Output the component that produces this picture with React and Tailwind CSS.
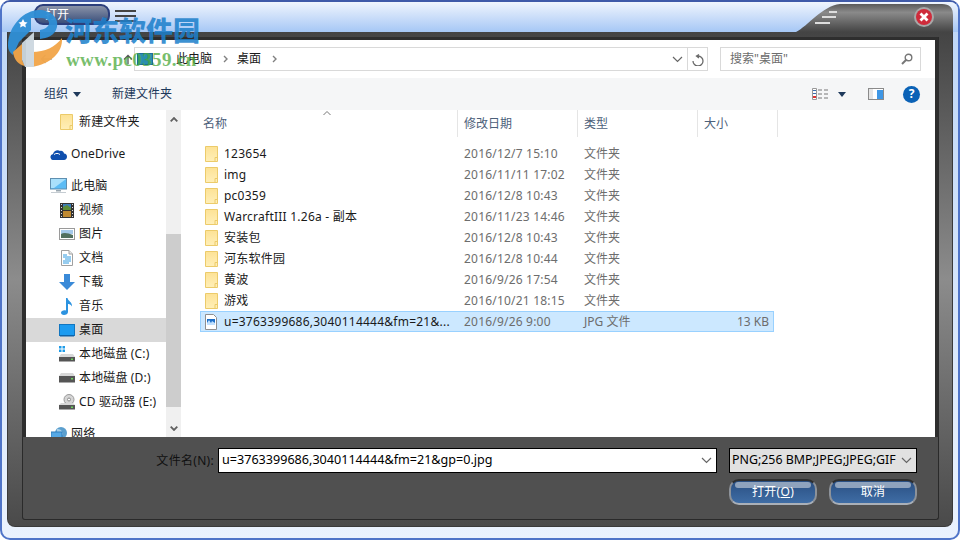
import React from 'react';

const files = [
  { name: '123654', date: '2016/12/7 15:10', type: '文件夹' },
  { name: 'img', date: '2016/11/11 17:02', type: '文件夹' },
  { name: 'pc0359', date: '2016/12/8 10:43', type: '文件夹' },
  { name: 'WarcraftIII 1.26a - 副本', date: '2016/11/23 14:46', type: '文件夹' },
  { name: '安装包', date: '2016/12/8 10:43', type: '文件夹' },
  { name: '河东软件园', date: '2016/12/8 10:44', type: '文件夹' },
  { name: '黄波', date: '2016/9/26 17:54', type: '文件夹' },
  { name: '游戏', date: '2016/10/21 18:15', type: '文件夹' },
];

const FolderIcon = () => (
  <svg width="13" height="16" viewBox="0 0 13 16" className="shrink-0">
    <defs>
      <linearGradient id="fold" x1="0" y1="0" x2="0" y2="1">
        <stop offset="0" stopColor="#fde295" />
        <stop offset="1" stopColor="#ffefb8" />
      </linearGradient>
    </defs>
    <path d="M.5.5h12v15H.5z" fill="url(#fold)" stroke="#eccb6a" />
    <path d="M10 15.500v-4h2.500" fill="none" stroke="#eccb6a" />
  </svg>
);

const Chevron = ({ className }) => (
  <svg width="11" height="7" viewBox="0 0 11 7" className={className}>
    <path d="M1 1l4.500 4.500L10 1" fill="none" stroke="currentColor" strokeWidth="1.200" />
  </svg>
);

const ScrollArrow = ({ className }) => (
  <svg width="8" height="5" viewBox="0 0 8 5" className={className}>
    <path d="M.7.7L4 4 7.300.7" fill="none" stroke="#606060" strokeWidth="1.800" />
  </svg>
);

const Caret = () => (
  <svg width="8" height="5" viewBox="0 0 8 5"><path d="M0 0h8L4 5z" fill="#1e395b" /></svg>
);

const Crumb = () => (
  <svg width="5" height="8" viewBox="0 0 5 8"><path d="M1 1l3 3-3 3" fill="none" stroke="#808080" strokeWidth="1.400" /></svg>
);

const icons = {
  folder: <FolderIcon />,
  cloud: (
    <svg width="17" height="11" viewBox="0 0 17 11">
      <path d="M4 11a3 3 0 0 1-1-6c.6-3 4.600-5 7-3 2-.6 3.600.6 4 2.500 2 0 3 1.500 3 3.200 0 1.800-1.200 3.300-3 3.300z" fill="#0f4fae" />
      <path d="M4 5.500c2-1.500 4-1.500 6 0" fill="none" stroke="#fff" />
    </svg>
  ),
  pc: (
    <svg width="17" height="16" viewBox="0 0 17 16">
      <rect x=".5" y=".5" width="16" height="10.500" fill="#5cbcf5" stroke="#5f8fb0" />
      <path d="M1 1h15L4 10H1z" fill="#a9e0fb" />
      <path d="M6 12h5v1.500H6z" fill="#9aa7b0" />
      <path d="M1 14h15v1H1z" fill="#c5ccd2" />
    </svg>
  ),
  video: (
    <svg width="14" height="15" viewBox="0 0 14 15">
      <rect width="14" height="15" fill="#333" />
      <path d="M3 1h8v6H3z" fill="#3f7fb8" />
      <path d="M3 8h8v6H3z" fill="#c08a32" />
      <path d="M3 4l4-2 4 3v2H3z" fill="#5e8e3a" />
      <path d="M1 1h1v1H1zM1 4h1v1H1zM1 7h1v1H1zM1 10h1v1H1zM1 13h1v1H1zM12 1h1v1h-1zM12 4h1v1h-1zM12 7h1v1h-1zM12 10h1v1h-1zM12 13h1v1h-1z" fill="#ddd" />
    </svg>
  ),
  image: (
    <svg width="16" height="12" viewBox="0 0 16 12">
      <rect x=".5" y=".5" width="15" height="11" fill="#fff" stroke="#9a9a9a" />
      <path d="M2 2h12v4H2z" fill="#a5c9ea" />
      <path d="M2 6c3-2 7-1 12 1v3H2z" fill="#52705f" />
    </svg>
  ),
  doc: (
    <svg width="12" height="16" viewBox="0 0 12 16">
      <path d="M.5.500h7.500l3.500 3.500v11.500H.5z" fill="#fff" stroke="#a0a0a0" />
      <path d="M8 .500v3.500h3.500" fill="#e8e8e8" stroke="#a0a0a0" />
      <path d="M2 5h4M2 7h8M4 9h6M2 11h8M2 13h6" stroke="#2f9ae0" />
    </svg>
  ),
  download: (
    <svg width="16" height="16" viewBox="0 0 16 16">
      <path d="M5 0h6v8h5l-8 8-8-8h5z" fill="#3a8ad8" />
    </svg>
  ),
  music: (
    <svg width="12" height="17" viewBox="0 0 12 17">
      <path d="M5 0h1.500c.3 3 5 4 4.500 8.500C10 6.500 8 6 7 6v8c0 2-2 3-4 3s-3-1-3-2.200C0 13 2.500 11.800 5 12.500z" fill="#2c93e0" />
    </svg>
  ),
  desktop: (
    <svg width="16" height="13" viewBox="0 0 16 13">
      <rect x=".5" y=".5" width="15" height="11" fill="#1c9bf0" stroke="#1276c0" />
      <path d="M1 11h14v1.500H1z" fill="#0e63a8" />
    </svg>
  ),
  winDrive: (
    <svg width="16" height="16" viewBox="0 0 16 16">
      <path d="M0 0h2.500v2.500H0zM3.500 0H6v2.500H3.500zM0 3.500h2.500V6H0zM3.500 3.500H6V6H3.500z" fill="#1e9be8" />
      <path d="M2 8h12l2 3H0z" fill="#d8d8d8" />
      <rect y="11" width="16" height="4.500" fill="#555" />
      <rect x="12" y="12.500" width="2" height="1.500" fill="#6cd05a" />
    </svg>
  ),
  drive: (
    <svg width="16" height="10" viewBox="0 0 16 10">
      <path d="M2 0h12l2 3H0z" fill="#d8d8d8" />
      <rect y="3" width="16" height="6.500" fill="#555" />
      <rect x="12" y="5" width="2" height="1.500" fill="#6cd05a" />
    </svg>
  ),
  cd: (
    <svg width="16" height="16" viewBox="0 0 16 16">
      <circle cx="10" cy="5.500" r="5" fill="#d5d5d5" stroke="#9a9a9a" />
      <circle cx="10" cy="5.500" r="1.500" fill="#fff" stroke="#8a8a8a" />
      <path d="M2 9h12l2 2H0z" fill="#d8d8d8" />
      <rect y="11" width="16" height="4.500" fill="#555" />
      <rect x="12" y="12.500" width="2" height="1.500" fill="#6cd05a" />
    </svg>
  ),
  network: (
    <svg width="16" height="14" viewBox="0 0 16 14">
      <circle cx="10" cy="6" r="6" fill="#5b9fce" />
      <path d="M6 2c3 0 5 1 6 5l-2 3-4-3z" fill="#a8cfe8" />
      <rect y="5" width="11" height="9" fill="#56a9e6" stroke="#2f7ebd" />
    </svg>
  ),
};

const tree = [
  { label: '新建文件夹', icon: 'folder', indent: true },
  { label: 'OneDrive', icon: 'cloud', gap: true },
  { label: '此电脑', icon: 'pc', gap: true },
  { label: '视频', icon: 'video', indent: true },
  { label: '图片', icon: 'image', indent: true },
  { label: '文档', icon: 'doc', indent: true },
  { label: '下载', icon: 'download', indent: true },
  { label: '音乐', icon: 'music', indent: true },
  { label: '桌面', icon: 'desktop', indent: true, active: true },
  { label: '本地磁盘 (C:)', icon: 'winDrive', indent: true },
  { label: '本地磁盘 (D:)', icon: 'drive', indent: true },
  { label: 'CD 驱动器 (E:)', icon: 'cd', indent: true },
  { label: '网络', icon: 'network', gap: true },
];

const TreeRow = ({ item }) => (
  <div className={`flex h-6 shrink-0 items-center ${item.gap ? 'mt-2' : ''} ${item.indent ? 'pl-[28px]' : 'pl-[20px]'} ${item.active ? 'bg-[#d9d9d9]' : ''}`}>
    <div className="flex w-[25px] shrink-0 justify-center">{icons[item.icon]}</div>
    <span className="whitespace-nowrap text-[12px] tracking-[0.15px] text-[#1a1a1a]">{item.label}</span>
  </div>
);

const HeaderCell = ({ label, className }) => (
  <div className={`flex h-full items-center border-r border-[#e5e5e5] pt-[1px] text-[12px] text-[#4c607a] ${className}`}>{label}</div>
);

const FileRow = ({ icon, name, date, type, size, selected }) => (
  <div className={`grid h-[21px] w-[574px] grid-cols-[258px_120px_120px_76px] items-center border text-[12px] ${selected ? 'border-[#99d1ff] bg-[#cce8ff]' : 'border-transparent'}`}>
    <div className="flex items-center pl-[4px]">
      <div className="flex w-[19px] shrink-0">{icon}</div>
      <span className="whitespace-nowrap tracking-[0.24px] text-[#1a1a1a]">{name}</span>
    </div>
    <span className="pl-[5px] tracking-[0.2px] text-[#6d6d6d]">{date}</span>
    <span className="pl-[5px] text-[#6d6d6d]">{type}</span>
    <span className="pr-[6px] text-right text-[#6d6d6d]">{size}</span>
  </div>
);

const JpgIcon = () => (
  <svg width="12" height="16" viewBox="0 0 12 16">
    <path d="M.5.500h8l3 3v12H.5z" fill="#fff" stroke="#8f8f8f" />
    <path d="M2 5h8v6H2z" fill="#1c6fc8" />
    <path d="M2 9l2-3 2 3 1-2 3 2v2H2z" fill="#bfe0ff" />
  </svg>
);

const GlossButton = ({ children }) => (
  <div className="relative flex h-[26px] w-[88px] items-center justify-center overflow-hidden rounded-[10px] border-2 border-b-[#aab0b8] border-l-[#8d9299] border-r-[#8d9299] border-t-[#2e2e2e] bg-gradient-to-b from-[#2a4f82] to-[#3f6da5] text-[12px] tracking-[0.3px] text-white">
    <div className="absolute left-[4px] right-[4px] top-[1px] h-[6px] rounded-[4px] bg-[#8fa3bd]" />
    <span className="relative">{children}</span>
  </div>
);

export default function App() {
  return (
    <div className="relative flex h-[540px] w-[960px] flex-col overflow-hidden rounded-[10px] border-2 border-[#4f74c8] border-t-[#3f5aa8] bg-gradient-to-b from-[#bcd5f7] to-[#eaf2fe] pb-[11px] font-['Noto_Sans','Noto_Sans_CJK_SC',sans-serif]">
      {/* title strip */}
      <div className="relative flex h-[30px] shrink-0 items-start bg-gradient-to-b from-[#f0f5fd] to-[#a6c7f5] px-[5px]">
        <div className="relative ml-[27px] mt-[2px] flex h-[21px] w-[76px] overflow-hidden rounded-[9px] border-2 border-[#2c3f7c] bg-gradient-to-b from-[#8a93a8] to-[#3c4f7a] pl-[9px]">
          <span className="text-[12px] leading-[18px] text-white">打开</span>
        </div>
        <div className="ml-[5px] mt-[8px] flex w-[21px] flex-col gap-[3px]">
          <div className="h-[2px] bg-[#444]" />
          <div className="h-[2px] bg-[#444]" />
          <div className="h-[2px] bg-[#555]" />
        </div>
        <div className="relative ml-auto h-[30px] w-[157px]">
          <svg width="157" height="28" viewBox="0 0 157 28" className="mt-[2px]">
            <defs>
              <linearGradient id="tab" x1="0" y1="0" x2="0" y2="1">
                <stop offset="0" stopColor="#5a5a5a" />
                <stop offset=".3" stopColor="#8a8a8a" />
                <stop offset="1" stopColor="#444" />
              </linearGradient>
            </defs>
            <path d="M0 28C12 22 26 2 44 0h102q11 0 11 11v17z" fill="url(#tab)" />
            <path d="M19 19h15M26 13h14M33 8h8" stroke="#ddd" strokeWidth="2" />
            <circle cx="128" cy="13" r="10" fill="#a8a8a8" />
            <circle cx="128" cy="13" r="8" fill="#cf2b3b" />
            <path d="M124.500 9.500l7 7M131.500 9.500l-7 7" stroke="#fff" strokeWidth="2.800" />
          </svg>
        </div>
      </div>

      {/* dark frame */}
      <div className="mx-[5px] flex min-h-0 flex-1 flex-col rounded-b-[8px] border-x border-b border-[#3a3a3a] bg-gradient-to-b from-[#444444] via-[#8c8c8c] to-[#4a4a4a] pb-[6px] pl-[14px] pr-[13px] pt-[5px]">
        <div className="flex min-h-0 flex-1 flex-col rounded-b-[3px] border border-[#2a2a2a] border-t-0 bg-[#505050] px-[3px]">
          <div className="mx-[-3px] h-[3px] shrink-0 bg-[#2e2e2e]" />
          <div className="mx-[-4px] flex h-[397px] shrink-0 flex-col border-x-4 border-[#2e2e2e] bg-white">
            {/* address row */}
            <div className="flex h-[38px] shrink-0 items-center">
              <div className="ml-[14px] flex w-[94px] items-center">
                <svg width="12" height="10" viewBox="0 0 12 10"><path d="M12 5H1.500M5.500 1l-4 4 4 4" fill="none" stroke="#a8a8a8" strokeWidth="1.300" /></svg>
                <svg width="10" height="10" viewBox="0 0 10 10" className="ml-[71px]"><path d="M5 10V1.500M1 5.500l4-4 4 4" fill="none" stroke="#555" strokeWidth="1.300" /></svg>
              </div>
              <div className="flex h-[24px] w-[574px] items-center border border-[#d9d9d9] text-[12px] text-[#1a1a1a]">
                <div className="ml-[2px] h-[12px] w-[16px] border border-[#1d6e9e] bg-[#2a8fb0]" />
                <span className="ml-[23px]">此电脑</span>
                <span className="ml-[11px] flex"><Crumb /></span>
                <span className="ml-[9px]">桌面</span>
                <span className="ml-[11px] flex"><Crumb /></span>
                <div className="ml-auto flex h-full items-center">
                  <Chevron className="mr-[4px] text-[#666]" />
                  <div className="flex h-full w-[20px] items-center justify-center border-l border-[#d9d9d9]">
                    <svg width="12" height="13" viewBox="0 0 12 13"><path d="M7 1.500L4.500 3 7 5M4.800 3H6a5 5 0 1 1-5 5" fill="none" stroke="#6a6a6a" strokeWidth="1.300" /></svg>
                  </div>
                </div>
              </div>
              <div className="ml-[12px] flex h-[24px] w-[201px] items-center justify-between border border-[#d9d9d9] pl-[9px] pr-[7px] text-[12px] text-[#6d6d6d]">
                <span>搜索"桌面"</span>
                <svg width="12" height="12" viewBox="0 0 12 12"><circle cx="7.500" cy="4.500" r="3.300" fill="none" stroke="#777" strokeWidth="1.400" /><path d="M5 7l-4 4" stroke="#777" strokeWidth="2" /></svg>
              </div>
            </div>

            {/* toolbar */}
            <div className="flex h-[32px] shrink-0 items-center bg-[#f5f6f7] text-[12px] text-[#1e395b]">
              <span className="ml-[18px]">组织</span>
              <span className="ml-[5px] flex"><Caret /></span>
              <span className="ml-[31px]">新建文件夹</span>
              <svg width="17" height="12" viewBox="0 0 17 12" className="ml-[640px]">
                <path d="M.5.500h4v11h-4z" fill="#fff" stroke="#999" />
                <path d="M1 2h3v1H1z" fill="#3b6fb0" /><path d="M1 5h3v1H1z" fill="#3b6fb0" /><path d="M1 8h3v2H1z" fill="#d33" />
                <path d="M6 2h4M12 2h4M6 6h4M12 6h4M6 10h4M12 10h4" stroke="#777" />
              </svg>
              <span className="ml-[9px] flex"><Caret /></span>
              <svg width="16" height="12" viewBox="0 0 16 12" className="ml-[22px]">
                <rect x=".5" y=".5" width="15" height="11" fill="#fff" stroke="#8a8a8a" />
                <path d="M1 1h4v10H1z" fill="#e5e5e5" /><path d="M9 2h6v9H9z" fill="#3f97e5" />
              </svg>
              <div className="ml-[19px] flex h-[17px] w-[17px] items-center justify-center rounded-full bg-[#0b62b6] text-[12px] font-bold leading-none text-white">?</div>
            </div>

            <div className="flex min-h-0 flex-1">
              {/* nav tree */}
              <div className="flex w-[140px] shrink-0 flex-col overflow-hidden">
                {tree.map((item) => <TreeRow key={item.label} item={item} />)}
              </div>
              {/* scrollbar */}
              <div className="flex w-[15px] shrink-0 flex-col items-center bg-[#f0f0f0]">
                <ScrollArrow className="mt-[7px] rotate-180" />
                <div className="mt-[112px] h-[173px] w-full bg-[#cdcdcd]" />
                <ScrollArrow className="mt-[19px]" />
              </div>
              {/* file list */}
              <div className="ml-[1px] flex min-w-0 flex-1 flex-col">
                <div className="relative flex h-[27px] shrink-0 items-center">
                  <HeaderCell label="名称" className="w-[276px] pl-[21px]" />
                  <HeaderCell label="修改日期" className="w-[120px] pl-[6px]" />
                  <HeaderCell label="类型" className="w-[120px] pl-[6px]" />
                  <HeaderCell label="大小" className="w-[80px] pl-[6px]" />
                  <svg width="8" height="4" viewBox="0 0 8 4" className="absolute left-[141px] top-[1px]"><path d="M.5 4L4 .5 7.500 4" fill="none" stroke="#777" /></svg>
                </div>
                <div className="ml-[18px] mt-[6px] flex flex-col">
                  {files.map((f) => <FileRow key={f.name} icon={<FolderIcon />} {...f} />)}
                  <FileRow icon={<JpgIcon />} name="u=3763399686,3040114444&fm=21&..." date="2016/9/26 9:00" type="JPG 文件" size="13 KB" selected />
                </div>
              </div>
            </div>
          </div>

          {/* bottom panel */}
          <div className="flex min-h-0 flex-1 flex-col items-end pr-[18px] pt-[11px] text-[12px]">
            <div className="flex h-[25px] items-center">
              <span className="mr-[4px] tracking-[0.3px] text-[#111]">文件名(N):</span>
              <div className="flex h-[25px] w-[499px] items-center justify-between border border-black bg-white pl-[3px] pr-[4px] text-[12.6px] text-black">
                <span>u=3763399686,3040114444&amp;fm=21&amp;gp=0.jpg</span>
                <Chevron className="text-[#666]" />
              </div>
              <div className="ml-[12px] flex h-[25px] w-[188px] items-center justify-between border border-black bg-[#e1e1e1] pl-[2px] pr-[4px] text-[12.4px] text-black">
                <span className="whitespace-nowrap">PNG;256 BMP;JPEG;JPEG;GIF</span>
                <Chevron className="text-[#666]" />
              </div>
            </div>
            <div className="mt-[6px] flex gap-[12px]">
              <GlossButton>打开(<u>O</u>)</GlossButton>
              <GlossButton>取消</GlossButton>
            </div>
          </div>
        </div>
      </div>

      {/* site watermark over the window */}
      <div className="pointer-events-none absolute left-[5px] top-[8px] h-[58px] w-[200px]">
        <svg width="56" height="57" viewBox="0 0 56 57" className="absolute left-0 top-0 opacity-95">
          <path d="M1 36C1 15 18 0 32 0c12 0 20 8 18 17-2 9-10 11-17 12v-9c6-1 9-4 9-7 0-4-4-5-9-5h-9v12L12 32 6 45c-3-2-5-5-5-9z" fill="#2f8fd6" />
          <path d="M55 28c1 15-12 26-30 29V42c13 0 23-5 30-14z" fill="#f2a548" />
          <path d="M6 42l9-8v16l3 6c-6-1-11-6-12-14z" fill="#f2a548" />
          <path d="M15 33l12-11v35h-9l-3-7z" fill="#cdd8e0" />
          <path d="M16 9l1.500 3 3 .5-2.200 2 .6 3-2.900-1.500-2.900 1.500.6-3-2.200-2 3-.5z" fill="#fff" />
        </svg>
        <span className="absolute left-[58px] top-[3px] whitespace-nowrap font-['Noto_Sans_CJK_SC',sans-serif] text-[27px] font-black leading-[34px] text-[#1c7fcb] opacity-85">河东软件园</span>
        <span className="absolute left-[59px] top-[38px] whitespace-nowrap font-['Liberation_Serif',serif] text-[19px] font-bold leading-[24px] tracking-[0.4px] text-[#4ba93c] opacity-75">www.pc0359.cn</span>
      </div>
    </div>
  );
}
